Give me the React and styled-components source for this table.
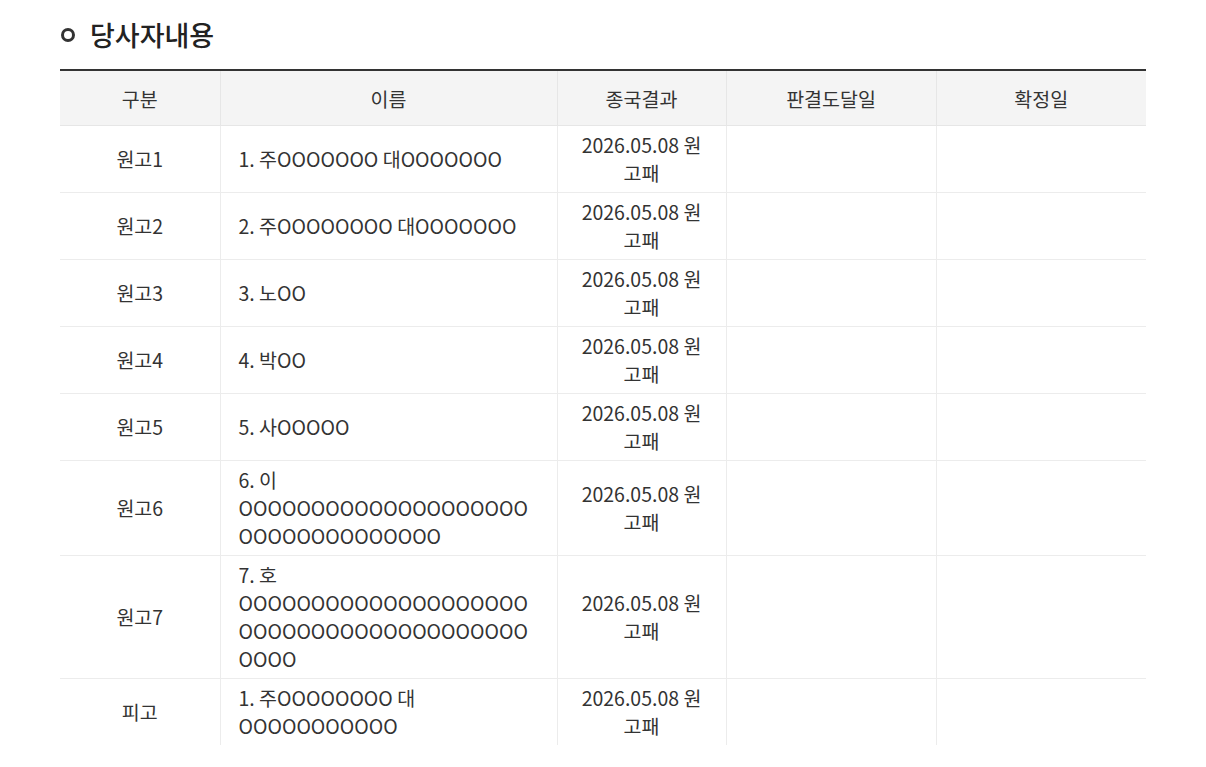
import styled, { createGlobalStyle } from 'styled-components';

const GlobalStyle = createGlobalStyle`
  body {
    margin: 0;
    background: #fff;
    font-family: 'Noto Sans CJK KR', 'Noto Sans', sans-serif;
    color: #333;
  }
`;

const O = (n) => 'O'.repeat(n);

const PARTIES = [
  { role: '원고1', name: `1. 주${O(7)} 대${O(7)}` },
  { role: '원고2', name: `2. 주${O(8)} 대${O(7)}` },
  { role: '원고3', name: `3. 노${O(2)}` },
  { role: '원고4', name: `4. 박${O(2)}` },
  { role: '원고5', name: `5. 사${O(5)}` },
  { role: '원고6', name: `6. 이 ${O(34)}` },
  { role: '원고7', name: `7. 호 ${O(44)}` },
  { role: '피고', name: `1. 주${O(8)} 대 ${O(11)}` },
];

function App() {
  return (
    <Container>
      <GlobalStyle />
      <Title>
        <Bullet />
        당사자내용
      </Title>
      <Table>
        <colgroup>
          <col width="160" />
          <col width="337" />
          <col width="169" />
          <col width="210" />
          <col width="210" />
        </colgroup>
        <thead>
          <tr>
            <Th>구분</Th>
            <Th>이름</Th>
            <Th>종국결과</Th>
            <Th>판결도달일</Th>
            <Th>확정일</Th>
          </tr>
        </thead>
        <tbody>
          {PARTIES.map((item) => (
            <Tr key={item.role + item.name}>
              <Td>{item.role}</Td>
              <Td $left>{item.name}</Td>
              <Td>2026.05.08 원고패</Td>
              <Td />
              <Td />
            </Tr>
          ))}
        </tbody>
      </Table>
    </Container>
  );
}

export default App;

const Container = styled.div`
  padding: 17px 60px 0;
  width: 1086px;
`;

const Title = styled.h2`
  margin: 0 0 16px;
  display: flex;
  align-items: center;
  gap: 15px;

  font-size: 27px;
  font-weight: 500;
  color: #222;
  line-height: 36px;
`;

const Bullet = styled.span`
  width: 8px;
  height: 8px;
  border: 3px solid #333;
  border-radius: 50%;
  margin-left: 1px;
`;

const Table = styled.table`
  width: 1086px;
  table-layout: fixed;
  border-collapse: collapse;
  border-top: 2px solid #333;
  font-size: 19.5px;
`;

const Th = styled.th`
  height: 54px;
  padding: 0 10px;
  background: #f4f4f4;
  border-left: 1px solid #e6e6e6;
  border-bottom: 1px solid #e6e6e6;

  font-weight: 400;
  color: #333;

  &:first-child {
    border-left: none;
  }
`;

const Tr = styled.tr`
  &:last-child td {
    border-bottom: none;
  }
`;

const Td = styled.td`
  padding: 5px 18px;
  line-height: 28px;
  text-align: ${({ $left }) => ($left ? 'left' : 'center')};
  overflow-wrap: anywhere;

  border-left: 1px solid #ececec;
  border-bottom: 1px solid #ececec;

  &:first-child {
    border-left: none;
  }
`;
